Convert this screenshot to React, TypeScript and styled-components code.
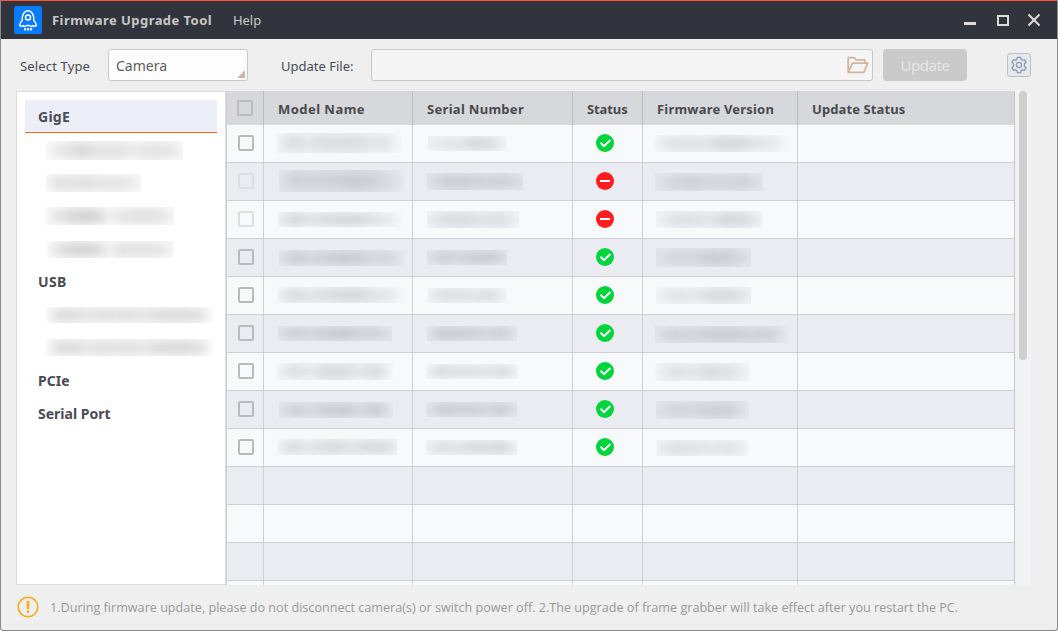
import React from 'react';
import styled, { createGlobalStyle, css } from 'styled-components';

const GlobalStyle = createGlobalStyle`
  *, *::before, *::after { box-sizing: border-box; }
  body {
    margin: 0;
    background: #ffffff;
    font-family: 'Noto Sans', 'Open Sans', sans-serif;
    font-size: 13px;
    color: #45454f;
  }
`;

const Window = styled.div`
  width: 1058px;
  height: 631px;
  display: flex;
  flex-direction: column;
  overflow: hidden;
  background: #efefef;
  border: 1px solid #8e8a8a;
  border-top: 0;
  border-radius: 0 0 3px 3px;
`;

const TitleBar = styled.header`
  flex: none;
  height: 39px;
  margin: 0 -1px;
  padding: 0 17px 0 14px;
  display: flex;
  align-items: center;
  background: #31343c;
  border-top: 1px solid #ff5533;
  color: #c9c8c6;
`;

const AppTitle = styled.h1`
  margin: 0 0 0 10px;
  width: 181px;
  font-size: 13px;
  line-height: 20px;
  font-weight: 700;
  letter-spacing: 0.44px;
  white-space: nowrap;
`;

const MenuItem = styled.span`
  line-height: 20px;
  letter-spacing: -0.05px;
`;

const WindowControls = styled.div`
  margin-left: auto;
  display: flex;
  gap: 18px;
`;

const Toolbar = styled.div`
  flex: none;
  height: 52px;
  padding: 10px 26px 0 19px;
  display: flex;
  align-items: flex-start;
`;

const FieldLabel = styled.label<{ $width: number; $spacing?: number }>`
  width: ${(p) => p.$width}px;
  line-height: 35px;
  color: #454b58;
  letter-spacing: ${(p) => p.$spacing ?? 0}px;
  white-space: nowrap;
`;

const field = css`
  height: 32px;
  border: 1px solid #c8c8c8;
  border-radius: 3px;
`;

const Select = styled.div`
  ${field}
  position: relative;
  width: 140px;
  margin-right: 33px;
  padding-left: 7px;
  background: #fdfdfd;
  font-size: 14px;
  line-height: 32px;
  color: #5c5c5c;
  &::after {
    content: '';
    position: absolute;
    right: 2px;
    bottom: 2px;
    border-left: 8px solid transparent;
    border-bottom: 8px solid #d1b7a3;
  }
`;

const FileField = styled.div`
  ${field}
  width: 502px;
  padding-right: 3px;
  display: flex;
  align-items: center;
  justify-content: flex-end;
  background: #f5f5f5;
`;

const UpdateButton = styled.button`
  width: 84px;
  height: 32px;
  margin-left: 10px;
  padding: 0;
  border: 0;
  border-radius: 4px;
  background: #cacaca;
  color: #e6e6e6;
  font: 400 15px/32px 'Noto Sans', sans-serif;
  letter-spacing: -0.45px;
`;

const SettingsButton = styled.button`
  width: 24px;
  height: 24px;
  margin: 4px 0 0 auto;
  padding: 0;
  display: flex;
  align-items: center;
  justify-content: center;
  border: 1px solid #b9c1cb;
  border-radius: 3px;
  background: #e5e9ed;
`;

const Content = styled.main`
  flex: none;
  height: 494px;
  margin-left: 15px;
  display: flex;
`;

const Sidebar = styled.nav`
  width: 210px;
  padding: 8px;
  background: #ffffff;
  border: 1px solid #dcdcde;
`;

const TreeGroup = styled.div<{ $selected?: boolean; $spacing?: number }>`
  height: 33px;
  padding-left: 13px;
  font-size: 14px;
  line-height: 33px;
  font-weight: 700;
  letter-spacing: ${(p) => p.$spacing ?? 0}px;
  color: #4b4b57;
  background: ${(p) => (p.$selected ? '#eceff8' : 'transparent')};
  border-bottom: 1px solid ${(p) => (p.$selected ? '#f2690f' : 'transparent')};
`;

const TreeLeaf = styled.div`
  height: 33px;
  display: flex;
`;

interface Blur {
  x: number;
  y: number;
  w: number;
  h: number;
  tones: number[];
}

const Redacted = styled.span<{ $blur: Blur; $cool?: boolean }>`
  flex: none;
  width: ${(p) => p.$blur.w}px;
  height: ${(p) => p.$blur.h}px;
  margin: ${(p) => `${p.$blur.y}px 0 0 ${p.$blur.x}px`};
  background: linear-gradient(
    90deg,
    ${(p) => p.$blur.tones.map((t) => `rgba(${p.$cool ? '35, 45, 58' : '35, 35, 42'}, ${t / 100})`).join(', ')}
  );
  mask-image: linear-gradient(rgba(0, 0, 0, 0.55), #000 40%, #000 62%, rgba(0, 0, 0, 0.55));
`;

const Table = styled.section`
  width: 789px;
  height: 494px;
  overflow: hidden;
  border-left: 1px solid #cbced4;
  border-right: 1px solid #c4c6cb;
`;

const columns = css`
  display: grid;
  grid-template-columns: 37px 149px 160px 70px 155px 216px;
`;

const HeaderRow = styled.div`
  ${columns}
  height: 34px;
  background: #d7d8dc;
`;

const HeaderCell = styled.div<{ $spacing?: number }>`
  padding-left: 14px;
  border-right: 1px solid #bdbec1;
  line-height: 36px;
  font-weight: 700;
  letter-spacing: ${(p) => p.$spacing ?? 0}px;
  color: #4a4a4c;
  white-space: nowrap;
  &:first-child { padding: 9px 0 0 10px; }
  &:last-child { border-right: 0; }
`;

const Row = styled.div<{ $shaded: boolean }>`
  ${columns}
  height: 38px;
  background: ${(p) => (p.$shaded ? '#ebecf2' : '#f7f9fb')};
`;

const Cell = styled.div`
  display: flex;
  border-right: 1px solid #cbced4;
  border-bottom: 1px solid #cbced4;
  &:last-child { border-right: 0; }
`;

const CheckCell = styled(Cell)`
  padding: 10px 0 0 11px;
`;

const StatusCell = styled(Cell)`
  padding: 9px 0 0 23px;
`;

const Checkbox = styled.span<{ $tone: 'normal' | 'muted' | 'header' }>`
  display: block;
  width: 16px;
  height: 16px;
  border: 2px solid ${(p) => ({ normal: '#bbbbbc', muted: '#dddee1', header: '#bdbdbd' })[p.$tone]};
  border-radius: 2px;
`;

const ScrollTrack = styled.div`
  width: 16px;
  padding-left: 4px;
  background: #f1f2f4;
`;

const ScrollThumb = styled.div`
  width: 8px;
  height: 269px;
  border-radius: 4px;
  background: #d0cece;
`;

const Footer = styled.footer`
  display: flex;
  padding: 11px 0 0 16px;
  gap: 11px;
`;

const Notice = styled.p`
  margin: 0;
  font: 400 12.61px/24px 'Open Sans', 'Noto Sans', sans-serif;
  color: #999999;
  white-space: nowrap;
`;

const Logo = () => (
  <svg width="28" height="28" viewBox="0 0 28 28">
    <rect width="28" height="28" rx="2.5" fill="#087bff" />
    <g fill="none" stroke="#fff" strokeWidth="1.5" strokeLinejoin="round" strokeLinecap="round">
      <path d="M8.3 14.3C7.6 8.4 10.8 4.7 14 4.7s6.4 3.7 5.7 9.6c1.5 1.4 2.5 3.2 2.6 5-.7 1.3-2.4 1.3-3.6.3-1.2 1.2-2.2 1.2-3.3 0h-2.8c-1.1 1.2-2.1 1.2-3.3 0-1.2 1-2.9 1-3.6-.3.1-1.8 1.1-3.6 2.6-5Z" />
      <circle cx="14" cy="11.5" r="2.5" />
    </g>
    <path d="M10 22h2.2v2.5H10zM13 22h2.2v2.5H13zM16 22h2.2v2.5H16z" fill="#d6e9ff" />
  </svg>
);

const MinimizeIcon = () => (
  <svg width="16" height="14" viewBox="0 0 16 14"><path d="M1 9h12v3H1z" fill="#dedbd7" /></svg>
);
const MaximizeIcon = () => (
  <svg width="12" height="14" viewBox="0 0 12 14"><path d="M1 3h10v9H1z" fill="none" stroke="#dedbd7" strokeWidth="2" /></svg>
);
const CloseIcon = () => (
  <svg width="14" height="14" viewBox="0 0 14 14"><path d="m1.5 1.5 11 11m0-11-11 11" stroke="#dedbd7" strokeWidth="2" /></svg>
);

const FolderIcon = () => (
  <svg width="22" height="18" viewBox="0 0 22 18" fill="none" stroke="#d3b5a0" strokeWidth="1.8" strokeLinejoin="round">
    <path d="M1.2 16.2V1.7h6.2l1.8 2.2h8.6v3.3" />
    <path d="M1.2 16.3 5.4 7.2h15.4l-3.9 9.1Z" />
  </svg>
);

const GearIcon = () => (
  <svg width="18" height="18" viewBox="0 0 18 18" fill="none" stroke="#8d9db2" strokeWidth="1.4" strokeLinejoin="round">
    <path d="M7.4 1.4h3.2l.5 2 1.3.8 2-.6L16 6.3l-1.5 1.5v2.4l1.5 1.5-1.6 2.7-2-.6-1.3.8-.5 2H7.4l-.5-2-1.3-.8-2 .6L2 11.7l1.5-1.5V7.8L2 6.3l1.6-2.7 2 .6 1.3-.8z" />
    <circle cx="9" cy="9" r="2.6" />
  </svg>
);

const StatusIcon = ({ ok }: { ok: boolean }) => (
  <svg width="18" height="18" viewBox="0 0 18 18">
    <circle cx="9" cy="9" r="9" fill={ok ? '#00d53c' : '#ff1c1c'} />
    {ok ? (
      <path d="m4.5 8.8 3.5 3.4L14.4 6" fill="none" stroke="#fff" strokeWidth="2" />
    ) : (
      <path d="M4 9h10" stroke="#fff" strokeWidth="2" />
    )}
  </svg>
);

const WarningIcon = () => (
  <svg width="22" height="22" viewBox="0 0 22 22">
    <circle cx="11" cy="11" r="9.8" fill="none" stroke="#fbac24" strokeWidth="1.6" />
    <path d="M9.4 5h3.2l-.5 8.2H9.9z" fill="#fbac24" />
    <circle cx="11" cy="15.7" r="1.4" fill="#fbac24" />
  </svg>
);

const b = (x: number, y: number, w: number, h: number, tones: number[]): Blur => ({ x, y, w, h, tones });

const gigeDevices = [
  b(21, 8, 137, 19, [4, 9, 13, 16, 12, 12, 12, 9, 11, 12, 10, 5]),
  b(21, 8, 95, 18, [5, 12, 12, 13, 12, 11, 11, 9, 5]),
  b(20, 8, 129, 18, [3, 11, 16, 18, 17, 7, 11, 12, 12, 11, 5]),
  b(22, 9, 126, 17, [4, 12, 17, 18, 15, 7, 12, 12, 12, 10, 5]),
];

const usbDevices = [
  b(21, 9, 168, 16, [3, 14, 14, 11, 13, 12, 13, 11, 14, 15, 15, 12, 1]),
  b(21, 8, 168, 17, [3, 14, 14, 11, 13, 12, 13, 11, 14, 15, 15, 12, 1]),
];

interface Device {
  ok: boolean;
  locked?: boolean;
  model: Blur;
  serial: Blur;
  firmware: Blur;
}

const devices: Device[] = [
  { ok: true, model: b(13, 8, 124, 20, [4, 12, 9, 12, 12, 13, 9, 9, 1]), serial: b(15, 11, 78, 15, [5, 8, 9, 14, 12, 4]), firmware: b(11, 10, 136, 17, [3, 9, 10, 9, 14, 14, 9, 7, 0]) },
  { ok: false, locked: true, model: b(15, 7, 125, 22, [5, 13, 12, 13, 14, 16, 13, 9, 2]), serial: b(14, 10, 96, 17, [6, 14, 14, 12, 13, 7]), firmware: b(12, 10, 108, 18, [4, 11, 13, 11, 11, 12, 5]) },
  { ok: false, locked: true, model: b(14, 11, 125, 15, [5, 14, 10, 12, 14, 14, 10, 7, 1]), serial: b(14, 10, 92, 17, [5, 12, 13, 10, 12, 4]), firmware: b(13, 10, 106, 17, [3, 10, 11, 9, 15, 13, 4]) },
  { ok: true, model: b(15, 11, 126, 16, [5, 14, 11, 13, 16, 14, 10, 10, 2]), serial: b(14, 11, 80, 15, [6, 13, 11, 14, 15, 7]), firmware: b(13, 9, 95, 19, [5, 10, 10, 15, 13, 5]) },
  { ok: true, model: b(14, 10, 128, 16, [4, 13, 9, 12, 14, 14, 10, 7, 0]), serial: b(15, 11, 78, 15, [5, 11, 11, 9, 12, 4]), firmware: b(13, 10, 95, 17, [4, 9, 8, 13, 13, 6]) },
  { ok: true, model: b(14, 11, 114, 15, [6, 13, 11, 14, 16, 12, 12, 5]), serial: b(14, 11, 90, 15, [5, 15, 14, 13, 11, 13, 5]), firmware: b(12, 11, 135, 17, [5, 12, 11, 15, 15, 12, 13, 0]) },
  { ok: true, model: b(13, 10, 116, 17, [3, 11, 8, 13, 13, 9, 13, 2]), serial: b(13, 11, 92, 15, [4, 12, 10, 10, 9, 12, 4]), firmware: b(12, 10, 95, 18, [3, 10, 9, 13, 10, 3]) },
  { ok: true, model: b(15, 11, 114, 16, [5, 13, 9, 14, 15, 10, 15, 3]), serial: b(13, 11, 91, 15, [5, 14, 13, 13, 11, 14, 6]), firmware: b(13, 10, 93, 18, [5, 11, 10, 14, 13, 3]) },
  { ok: true, model: b(14, 10, 119, 16, [4, 12, 8, 12, 13, 10, 13, 13, 6]), serial: b(13, 11, 91, 15, [5, 11, 9, 13, 13, 14, 5]), firmware: b(14, 11, 91, 16, [5, 11, 10, 8, 10, 4]) },
];

const emptyRows = [0, 1, 2, 3];

export default function App() {
  return (
    <>
      <GlobalStyle />
      <Window>
        <TitleBar>
          <Logo />
          <AppTitle>Firmware Upgrade Tool</AppTitle>
          <MenuItem>Help</MenuItem>
          <WindowControls>
            <MinimizeIcon />
            <MaximizeIcon />
            <CloseIcon />
          </WindowControls>
        </TitleBar>

        <Toolbar>
          <FieldLabel $width={88} $spacing={0.15}>Select Type</FieldLabel>
          <Select>Camera</Select>
          <FieldLabel $width={90}>Update File:</FieldLabel>
          <FileField><FolderIcon /></FileField>
          <UpdateButton disabled>Update</UpdateButton>
          <SettingsButton><GearIcon /></SettingsButton>
        </Toolbar>

        <Content>
          <Sidebar>
            <TreeGroup $selected $spacing={0.25}>GigE</TreeGroup>
            {gigeDevices.map((d, i) => <TreeLeaf key={i}><Redacted $blur={d} /></TreeLeaf>)}
            <TreeGroup $spacing={0.4}>USB</TreeGroup>
            {usbDevices.map((d, i) => <TreeLeaf key={i}><Redacted $blur={d} /></TreeLeaf>)}
            <TreeGroup>PCIe</TreeGroup>
            <TreeGroup>Serial Port</TreeGroup>
          </Sidebar>

          <Table>
            <HeaderRow>
              <HeaderCell><Checkbox $tone="header" /></HeaderCell>
              <HeaderCell $spacing={0.46}>Model Name</HeaderCell>
              <HeaderCell $spacing={0.3}>Serial Number</HeaderCell>
              <HeaderCell $spacing={-0.1}>Status</HeaderCell>
              <HeaderCell $spacing={0.2}>Firmware Version</HeaderCell>
              <HeaderCell $spacing={0.1}>Update Status</HeaderCell>
            </HeaderRow>
            {devices.map((d, i) => (
              <Row key={i} $shaded={i % 2 === 1}>
                <CheckCell><Checkbox $tone={d.locked ? 'muted' : 'normal'} /></CheckCell>
                <Cell><Redacted $blur={d.model} $cool /></Cell>
                <Cell><Redacted $blur={d.serial} $cool /></Cell>
                <StatusCell><StatusIcon ok={d.ok} /></StatusCell>
                <Cell><Redacted $blur={d.firmware} $cool /></Cell>
                <Cell />
              </Row>
            ))}
            {emptyRows.map((i) => (
              <Row key={i} $shaded={i % 2 === 0}>
                <Cell /><Cell /><Cell /><Cell /><Cell /><Cell />
              </Row>
            ))}
          </Table>
          <ScrollTrack><ScrollThumb /></ScrollTrack>
        </Content>

        <Footer>
          <WarningIcon />
          <Notice>
            1.During firmware update, please do not disconnect camera(s) or switch power off. 2.The upgrade of frame grabber will take effect after you restart the PC.
          </Notice>
        </Footer>
      </Window>
    </>
  );
}
